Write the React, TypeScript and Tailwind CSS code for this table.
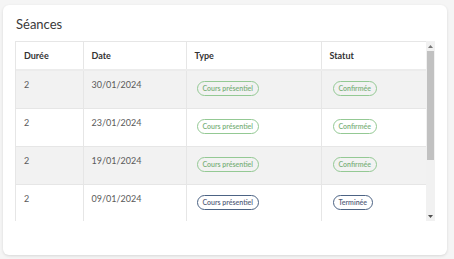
const rows = [
  { duree: '2', date: '30/01/2024', done: false },
  { duree: '2', date: '23/01/2024', done: false },
  { duree: '2', date: '19/01/2024', done: false },
  { duree: '2', date: '09/01/2024', done: true },
]

function Badge({ label, done }: { label: string; done: boolean }) {
  return (
    <span
      className={
        done
          ? 'inline-flex h-[15px] items-center rounded-full border border-[#4c6384] px-[5px] text-[7px] font-semibold text-[#55607a]'
          : 'inline-flex h-[15px] items-center rounded-full border border-[#94c994] px-[5px] text-[7px] font-semibold text-[#79b079]'
      }
    >
      {label}
    </span>
  )
}

export default function App() {
  return (
    <div
      className="w-[454px] h-[259px] bg-[#f5f5f5] pt-[5px] pl-[3px]"
      style={{ fontFamily: 'Lato, "Open Sans", sans-serif' }}
    >
      <div className="w-[444px] h-[250px] rounded-md bg-white pl-3 pt-[10px] shadow-[0_1px_3px_rgba(0,0,0,0.12)]">
        <h2 className="h-[18px] mb-[8px] pl-px text-[13px] leading-[18px] text-[#3a3a3a]">Séances</h2>

        <div className="flex w-[420px] h-[180px]">
          <div className="w-[411px] h-[180px] overflow-hidden border-l border-t border-[#e6e6e6]">
            <table className="w-[410px] table-fixed border-collapse text-[9px] text-[#5a5a5a]">
              <colgroup>
                <col className="w-[67px]" />
                <col className="w-[103px]" />
                <col className="w-[135px]" />
                <col className="w-[105px]" />
              </colgroup>
              <thead>
                <tr className="h-[28px] bg-white border-b-2 border-[#ececec]">
                  <th className="pl-[8px] text-left font-bold text-[#333] border-r border-[#e6e6e6]">Durée</th>
                  <th className="pl-[8px] text-left font-bold text-[#333] border-r border-[#e6e6e6]">Date</th>
                  <th className="pl-[8px] text-left font-bold text-[#333] border-r border-[#e6e6e6]">Type</th>
                  <th className="pl-[8px] text-left font-bold text-[#333]">Statut</th>
                </tr>
              </thead>
              <tbody>
                {rows.map((r, i) => (
                  <tr
                    key={i}
                    className={
                      i % 2 === 0
                        ? 'h-[38px] bg-[#f2f2f2] border-b border-[#e6e6e6]'
                        : 'h-[38px] bg-white border-b border-[#e6e6e6]'
                    }
                  >
                    <td className="align-top pt-[8px] pl-[8px] leading-[12px] border-r border-[#e6e6e6]">{r.duree}</td>
                    <td className="align-top pt-[8px] pl-[8px] leading-[12px] border-r border-[#e6e6e6]">{r.date}</td>
                    <td className="align-top pt-[10px] pl-[10px] border-r border-[#e6e6e6]">
                      <Badge label="Cours présentiel" done={r.done} />
                    </td>
                    <td className="align-top pt-[10px] pl-[11px]">
                      <Badge label={r.done ? 'Terminée' : 'Confirmée'} done={r.done} />
                    </td>
                  </tr>
                ))}
              </tbody>
            </table>
          </div>

          <div className="flex w-[9px] h-[180px] flex-col bg-[#f1f1f1]">
            <div className="flex h-[10px] items-center justify-center">
              <svg width="5" height="3" viewBox="0 0 5 3">
                <path d="M0 3 L2.5 0 L5 3 Z" fill="#777" />
              </svg>
            </div>
            <div className="mx-[1px] h-[109px] bg-[#c1c1c1]" />
            <div className="flex-1" />
            <div className="flex h-[10px] items-center justify-center">
              <svg width="5" height="3" viewBox="0 0 5 3">
                <path d="M0 0 L5 0 L2.5 3 Z" fill="#505050" />
              </svg>
            </div>
          </div>
        </div>
      </div>
    </div>
  )
}
